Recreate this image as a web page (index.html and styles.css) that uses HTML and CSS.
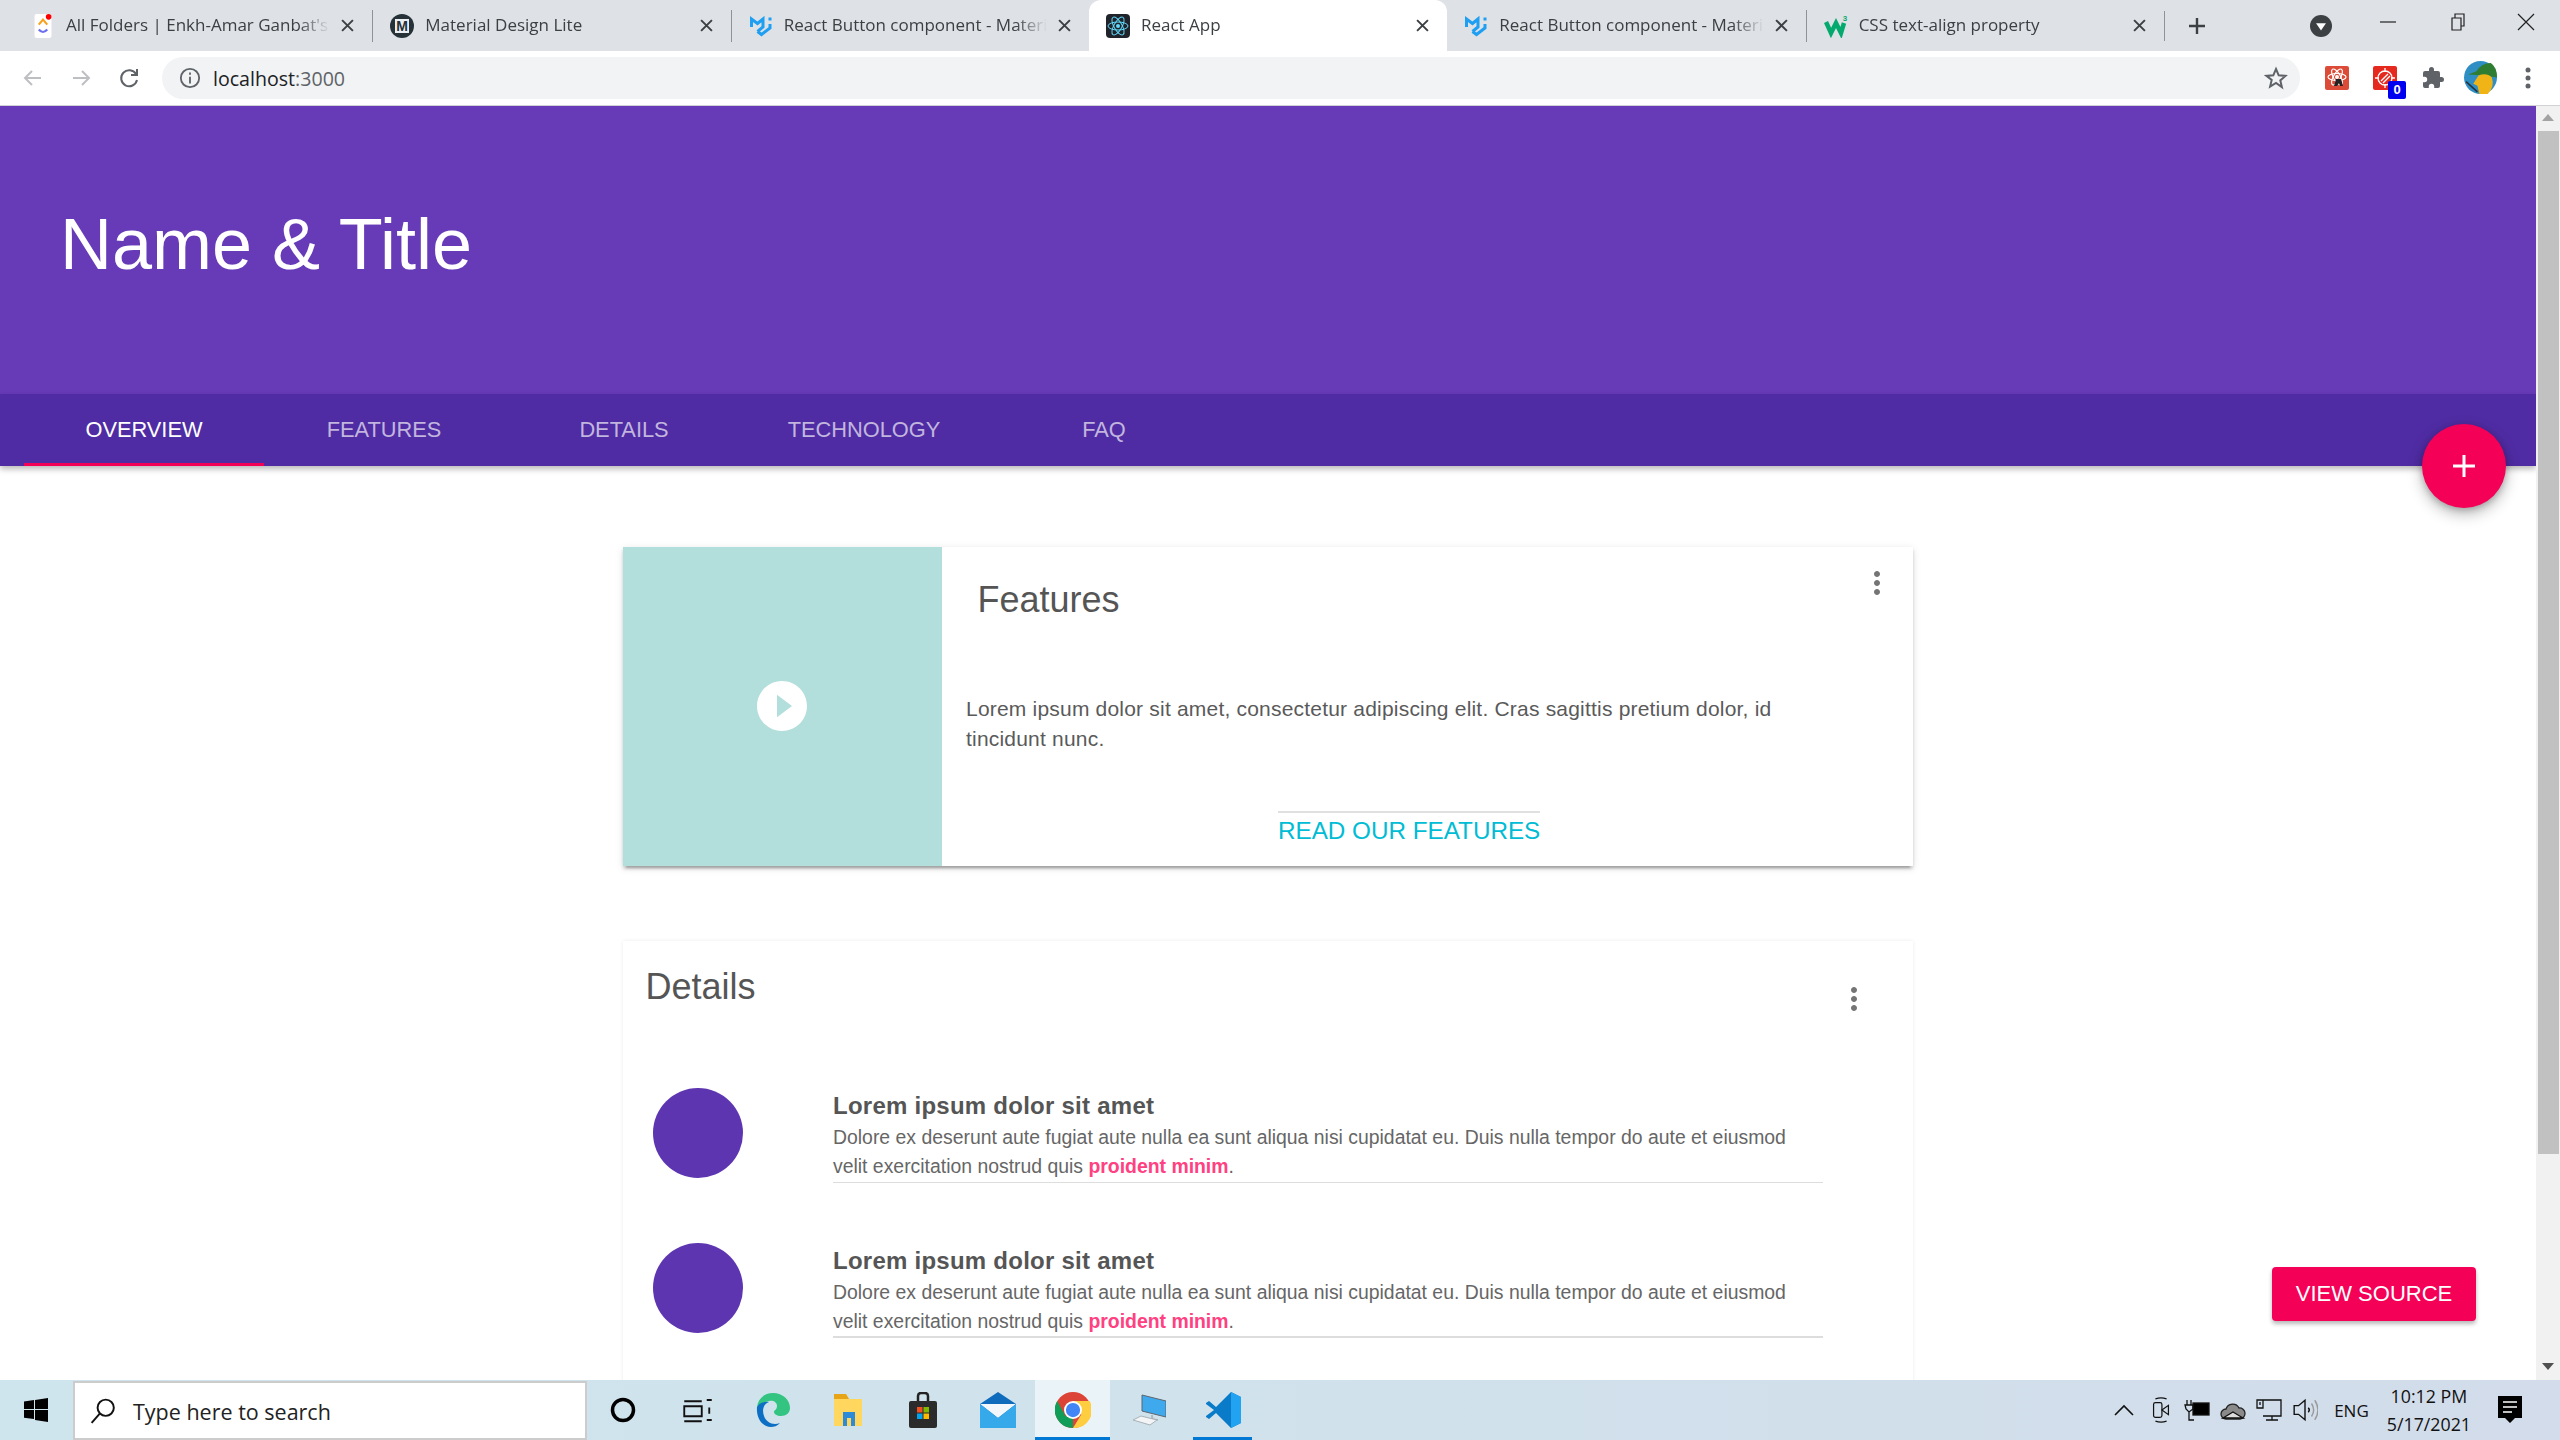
FILE: index.html
```html
<!DOCTYPE html>
<html lang="en">
<head>
<meta charset="utf-8">
<title>React App</title>
<link rel="stylesheet" href="styles.css">
</head>
<body>
<div class="screen">
  <div class="tabstrip">
    <div class="tab">
      <svg class="fav" viewBox="0 0 24 34"><rect width="24" height="34" rx="3" fill="#fff"/><path d="M6 15l6-7 6 7" fill="none" stroke="#f7a21b" stroke-width="3"/><path d="M6 22q6 7 12 0" fill="none" stroke="#6b6ff0" stroke-width="3"/><circle cx="20" cy="4" r="4" fill="#f00"/></svg>
      <span class="tab-title">All Folders | Enkh-Amar Ganbat's</span>
      <svg class="tab-x" viewBox="0 0 12 12"><path d="M1 1l10 10M11 1L1 11"/></svg>
    </div>
    <div class="tab sep">
      <svg class="fav" viewBox="0 0 24 24"><circle cx="12" cy="12" r="12" fill="#263238"/><rect x="5" y="5" width="14" height="14" fill="#eceff1"/><text x="12" y="17" text-anchor="middle" class="fav-m">M</text></svg>
      <span class="tab-title">Material Design Lite</span>
      <svg class="tab-x" viewBox="0 0 12 12"><path d="M1 1l10 10M11 1L1 11"/></svg>
    </div>
    <div class="tab sep">
      <svg class="fav" viewBox="0 0 24 24"><path class="mui" d="M2.500 13V5l6 4.500 5.500-4.500v8l-5.500 4.500M21 10v4l-8.500 6.500-4-3"/><path class="mui" d="M21 3.500v3"/></svg>
      <span class="tab-title">React Button component - Material-UI</span>
      <svg class="tab-x" viewBox="0 0 12 12"><path d="M1 1l10 10M11 1L1 11"/></svg>
    </div>
    <div class="tab active">
      <svg class="fav" viewBox="0 0 24 24"><rect width="24" height="24" rx="4" fill="#20232a"/><g fill="none" stroke="#61dafb" stroke-width="1"><ellipse cx="12" cy="12" rx="10" ry="4"/><ellipse cx="12" cy="12" rx="10" ry="4" transform="rotate(60 12 12)"/><ellipse cx="12" cy="12" rx="10" ry="4" transform="rotate(120 12 12)"/></g><circle cx="12" cy="12" r="2" fill="#61dafb"/></svg>
      <span class="tab-title">React App</span>
      <svg class="tab-x" viewBox="0 0 12 12"><path d="M1 1l10 10M11 1L1 11"/></svg>
    </div>
    <div class="tab">
      <svg class="fav" viewBox="0 0 24 24"><path class="mui" d="M2.500 13V5l6 4.500 5.500-4.500v8l-5.500 4.500M21 10v4l-8.500 6.500-4-3"/><path class="mui" d="M21 3.500v3"/></svg>
      <span class="tab-title">React Button component - Material-UI</span>
      <svg class="tab-x" viewBox="0 0 12 12"><path d="M1 1l10 10M11 1L1 11"/></svg>
    </div>
    <div class="tab sep">
      <svg class="fav" viewBox="0 0 24 24"><path class="w3" d="M2 8l5 11 5-10 5 10 3-10"/><text x="21" y="7" class="w3-num" text-anchor="middle">3</text></svg>
      <span class="tab-title">CSS text-align property</span>
      <svg class="tab-x" viewBox="0 0 12 12"><path d="M1 1l10 10M11 1L1 11"/></svg>
    </div>
    <div class="newtab">
      <svg class="plus-icon" viewBox="0 0 18 18"><path d="M9 1v16M1 9h16"/></svg>
    </div>
    <svg class="profile-drop" viewBox="0 0 20 20"><circle cx="10" cy="10" r="10" fill="#3c4043"/><path d="M5.500 7.500h9L10 14z" fill="#fff"/></svg>
    <div class="winctl">
      <svg viewBox="0 0 18 18"><path d="M1 9h16"/></svg>
      <svg viewBox="0 0 18 18"><path d="M4 5h9v12H4zM7 5V1h9v12h-3"/></svg>
      <svg viewBox="0 0 18 18"><path d="M1 1l16 16M17 1L1 17"/></svg>
    </div>
  </div>

  <div class="toolbar">
    <svg class="nav-ico dim" viewBox="0 0 24 24"><path d="M20 12H5M11 5l-7 7 7 7"/></svg>
    <svg class="nav-ico dim" viewBox="0 0 24 24"><path d="M4 12h15M13 5l7 7-7 7"/></svg>
    <svg class="nav-ico" viewBox="0 0 24 24"><path d="M19 8a8 8 0 1 0 1 6M20 3v6h-6"/></svg>
    <div class="omnibox">
      <svg class="info" viewBox="0 0 24 24"><circle cx="12" cy="12" r="10"/><path d="M12 10.500V18M12 6v2.500"/></svg>
      <span class="url">localhost<span class="url-port">:3000</span></span>
      <svg class="star" viewBox="0 0 24 24"><path d="M12 3l2.700 6.300 6.800.6-5.200 4.500 1.600 6.700L12 17l-5.900 3.600 1.600-6.700L2.500 9.900l6.800-.6z"/></svg>
    </div>
    <div class="ext ext-a"><svg viewBox="0 0 24 24"><g fill="none" stroke="#fff" stroke-width="1.200"><ellipse cx="12" cy="11" rx="9" ry="3.500"/><ellipse cx="12" cy="11" rx="9" ry="3.500" transform="rotate(60 12 11)"/><ellipse cx="12" cy="11" rx="9" ry="3.500" transform="rotate(120 12 11)"/></g><circle cx="12" cy="11" r="2" fill="#fff"/><path d="M11 13h5l2 7h-3l-1-3-2 3h-3z" fill="#222"/></svg></div>
    <div class="ext ext-b"><svg viewBox="0 0 24 24"><g fill="none" stroke="#fff" stroke-width="1.300"><circle cx="12" cy="12" r="7"/><path d="M12 2v4M12 18v4M2 12h4M18 12h4M8 15l7-7M10 17l7-7"/></g></svg><span class="badge">0</span></div>
    <svg class="puzzle" viewBox="0 0 24 24"><path d="M20.500 11H19V7a2 2 0 0 0-2-2h-4V3.500a2.500 2.500 0 0 0-5 0V5H4a2 2 0 0 0-2 2v3.800h1.500a2.700 2.700 0 0 1 0 5.400H2V20a2 2 0 0 0 2 2h3.800v-1.500a2.700 2.700 0 0 1 5.400 0V22H17a2 2 0 0 0 2-2v-4h1.500a2.500 2.500 0 0 0 0-5z"/></svg>
    <svg class="avatar-top" viewBox="0 0 32 32"><circle cx="16" cy="16" r="16" fill="#2f8fc4"/><path d="M4 13l8-3q5-8 14-8 6 4 6 14l-12-2z" fill="#2f7d32"/><path d="M14 14q8-3 13 2 3 9-4 16h-8l-2-8-4-2z" fill="#f0b416"/><path d="M2 20l11 10" stroke="#263238" stroke-width="1.500"/></svg>
    <svg class="kebab-top" viewBox="0 0 6 24"><circle cx="3" cy="4" r="2.500"/><circle cx="3" cy="12" r="2.500"/><circle cx="3" cy="20" r="2.500"/></svg>
  </div>

  <div class="viewport">
    <div class="page">
      <header class="hero"><h1 class="hero-title">Name &amp; Title</h1></header>
      <nav class="tabs">
        <a class="nav-tab current">OVERVIEW</a>
        <a class="nav-tab">FEATURES</a>
        <a class="nav-tab">DETAILS</a>
        <a class="nav-tab">TECHNOLOGY</a>
        <a class="nav-tab">FAQ</a>
      </nav>
      <button class="fab"><svg viewBox="0 0 22 22"><path d="M11 0v22M0 11h22"/></svg></button>

      <main class="content">
        <section class="card card-features">
          <div class="media">
            <svg class="play" viewBox="0 0 24 24"><path d="M12 2C6.480 2 2 6.480 2 12s4.480 10 10 10 10-4.480 10-10S17.520 2 12 2zm-2 14.500v-9l6 4.500-6 4.500z"/></svg>
          </div>
          <div class="features-body">
            <div class="card-head head-features">
              <h2 class="card-title title-features">Features</h2>
              <svg class="more" viewBox="0 0 24 24"><path d="M12 8c1.100 0 2-.9 2-2s-.9-2-2-2-2 .9-2 2 .9 2 2 2zm0 2c-1.100 0-2 .9-2 2s.9 2 2 2 2-.9 2-2-.9-2-2-2zm0 6c-1.100 0-2 .9-2 2s.9 2 2 2 2-.9 2-2-.9-2-2-2z"/></svg>
            </div>
            <p class="features-text">Lorem ipsum dolor sit amet, consectetur adipiscing elit. Cras sagittis pretium dolor, id tincidunt nunc.</p>
            <a class="read-more">READ OUR FEATURES</a>
          </div>
        </section>

        <section class="card card-details">
          <div class="card-head head-details">
            <h2 class="card-title">Details</h2>
            <svg class="more more-details" viewBox="0 0 24 24"><path d="M12 8c1.100 0 2-.9 2-2s-.9-2-2-2-2 .9-2 2 .9 2 2 2zm0 2c-1.100 0-2 .9-2 2s.9 2 2 2 2-.9 2-2-.9-2-2-2zm0 6c-1.100 0-2 .9-2 2s.9 2 2 2 2-.9 2-2-.9-2-2-2z"/></svg>
          </div>
          <div class="detail-row">
            <div class="dot"></div>
            <div class="detail-text">
              <h3 class="detail-title">Lorem ipsum dolor sit amet</h3>
              <p class="detail-copy">Dolore ex deserunt aute fugiat aute nulla ea sunt aliqua nisi cupidatat eu. Duis nulla tempor do aute et eiusmod velit exercitation nostrud quis <b class="accent">proident minim</b>.</p>
            </div>
          </div>
          <div class="detail-row">
            <div class="dot"></div>
            <div class="detail-text thick">
              <h3 class="detail-title">Lorem ipsum dolor sit amet</h3>
              <p class="detail-copy">Dolore ex deserunt aute fugiat aute nulla ea sunt aliqua nisi cupidatat eu. Duis nulla tempor do aute et eiusmod velit exercitation nostrud quis <b class="accent">proident minim</b>.</p>
            </div>
          </div>
        </section>
      </main>

      <a class="view-source">VIEW SOURCE</a>
    </div>
    <div class="scrollbar">
      <div class="sb-arrow up"></div>
      <div class="sb-thumb"></div>
      <div class="sb-arrow down"></div>
    </div>
  </div>

  <footer class="taskbar">
    <div class="start"><svg viewBox="0 0 24 24"><path d="M0 3.500l10-1.400V11H0zM11 2l13-2v11H11zM0 12h10v9L0 19.700zM11 12h13v12l-13-2z"/></svg></div>
    <div class="search">
      <svg viewBox="0 0 24 24"><circle cx="14.500" cy="9" r="7.500"/><path d="M9 14.500L1.500 23"/></svg>
      <span>Type here to search</span>
    </div>
    <div class="apps">
      <div class="app"><svg class="cortana" viewBox="0 0 24 24"><circle cx="12" cy="12" r="9"/></svg></div>
      <div class="app"><svg class="taskview" viewBox="0 0 24 24"><path d="M1 5h14M1 9h14v8H1zM1 21h14M19 4h4M19 20h4M21 10v5" /></svg></div>
      <div class="app"><svg viewBox="0 0 36 36"><path d="M18 1c10 0 17 7 17 15 0 5-4 8-9 8-4 0-7-2-7-4 0-2 3-2 3-6 0-4-4-6-8-5C8 10 3 14 2 15 3 7 9 1 18 1z" fill="#33c481"/><path d="M2 15c2-4 8-6 12-5-6 2-7 9-5 14 2 6 9 10 16 7-3 3-6 4-9 4C8 35 1 27 2 15z" fill="#0c6fc4"/></svg></div>
      <div class="app"><svg viewBox="0 0 32 36"><path d="M2 2h12l3 5h13v27H2z" fill="#ffd75e"/><path d="M2 2h12l3 5H2z" fill="#e8a417"/><path d="M11 34V20h12v14h-4v-8h-4v8z" fill="#2d8ad8"/></svg></div>
      <div class="app"><svg viewBox="0 0 28 36"><path d="M9 11V4q0-3 3-3h4q3 0 3 3v7" fill="none" stroke="#222" stroke-width="2.500"/><rect y="9" width="28" height="27" rx="2" fill="#2b2b2b"/><rect x="8" y="15" width="5.500" height="5.500" fill="#f25022"/><rect x="14.500" y="15" width="5.500" height="5.500" fill="#7fba00"/><rect x="8" y="21.500" width="5.500" height="5.500" fill="#00a4ef"/><rect x="14.500" y="21.500" width="5.500" height="5.500" fill="#ffb900"/></svg></div>
      <div class="app"><svg viewBox="0 0 36 36"><path d="M0 12L18 0l18 12v24H0z" fill="#0f6cbd"/><path d="M0 12h36L18 26z" fill="#f2f7fb"/><path d="M0 36V12l18 14 18-14v24z" fill="#35a9ea"/></svg></div>
      <div class="app app-active"><svg viewBox="0 0 48 48"><circle cx="24" cy="24" r="24" fill="#db4437"/><path d="M24 48A24 24 0 0 1 3 12l11 20 10 2z" fill="#0f9d58"/><path d="M24 12h22a24 24 0 0 1-22 36l11-18z" fill="#ffcd40"/><circle cx="24" cy="24" r="12" fill="#fff"/><circle cx="24" cy="24" r="9.500" fill="#4285f4"/></svg></div>
      <div class="app"><svg viewBox="0 0 36 36"><path d="M12 3l24 6v16L12 19z" fill="#3fa9ee" stroke="#5b6770"/><path d="M22 23v4l6 1" fill="#cfd8dc" stroke="#8a979f"/><path d="M3 28l8-4 16 4-7 5z" fill="#f2f4f5" stroke="#a8b2b8"/></svg></div>
      <div class="app app-open"><svg viewBox="0 0 36 36"><path d="M26 0l10 5v26l-10 5L11 21 4 27l-3-2v-1l8-6-8-6v-1l3-2 7 6z" fill="#0a7bc8"/><path d="M26 0l10 5v26l-10 5z" fill="#22a3f2"/></svg></div>
    </div>
    <div class="tray">
      <svg class="tray-ico chev" viewBox="0 0 20 12"><path d="M1 11l9-9 9 9"/></svg>
      <svg class="tray-ico" viewBox="0 0 20 28"><rect x="2" y="6" width="9" height="16" rx="2"/><path d="M11 14l7-5v10zM4 2q6-2 12 0M4 26q6 2 12 0"/></svg>
      <svg class="tray-ico" viewBox="0 0 26 22"><rect x="9" y="4" width="16" height="12" fill="#000"/><path d="M3 1v5M7 1v5M1 6h8v4l-4 3-3-3zM5 13v8h5"/></svg>
      <svg class="tray-ico" viewBox="0 0 26 20"><path d="M6 19a5 5 0 0 1 0-10 7 7 0 0 1 13-1 5.500 5.500 0 0 1 1 11z" fill="#8a8a8a" stroke="#222"/><path d="M3 18l10-6 10 6z" fill="#ddd"/></svg>
      <svg class="tray-ico" viewBox="0 0 26 24"><path d="M1 2h6v8H1zM7 2h18v16H7M16 18v4M10 22h12M4 4v3"/></svg>
      <svg class="tray-ico" viewBox="0 0 24 24"><path d="M2 8h4l6-5v18l-6-5H2zM15 10q2 2 0 4"/><path class="faint" d="M18 6q4 6 0 12M21 3q6 9 0 18"/></svg>
      <span class="lang">ENG</span>
      <div class="clock"><span>10:12 PM</span><span>5/17/2021</span></div>
      <svg class="notif" viewBox="0 0 24 28"><path d="M0 0h24v22h-7l-5 5-5-5H0z" fill="#000"/><path d="M5 6h14M5 11h14M5 16h9" stroke="#fff" stroke-width="1.500"/></svg>
    </div>
  </footer>
</div>
</body>
</html>
```
FILE: styles.css
```css
* { box-sizing: border-box; }
html, body { margin: 0; padding: 0; }
body { font-family: "Liberation Sans", Arial, sans-serif; background: #fff; }
.screen { width: 2560px; height: 1440px; display: flex; flex-direction: column; overflow: hidden; }

/* browser chrome */
.tabstrip { height: 51px; background: #dee1e6; display: flex; align-items: center; padding-left: 14px; flex: none; font-family: "Open Sans", sans-serif; }
.tab { width: 358.33px; height: 51px; display: flex; align-items: center; padding: 0 18px 0 17px; gap: 11px; position: relative; flex: none; }
.tab.sep { border-left: 1.5px solid #8f9297; border-image: linear-gradient(#dee1e6 11px, #8f9297 11px, #8f9297 41px, #dee1e6 41px) 1; }
.tab.active { background: #fff; border-radius: 12px 12px 0 0; }
.fav { width: 24px; height: 24px; flex: none; }
.fav-m { font-size: 14px; font-weight: 700; font-family: "Liberation Sans", sans-serif; fill: #263238; }
.mui { fill: none; stroke: #1e9ff2; stroke-width: 3; }
.w3 { fill: none; stroke: #04aa6d; stroke-width: 4.500; }
.w3-num { font: 700 8px "Liberation Sans", sans-serif; fill: #04aa6d; }
.tab-title { flex: 1; min-width: 0; white-space: nowrap; overflow: hidden; font-size: 17px; line-height: 24px; padding-bottom: 2px; color: #3c4043; -webkit-mask-image: linear-gradient(90deg, #000 88%, transparent); mask-image: linear-gradient(90deg, #000 88%, transparent); }
.tab-x { width: 13px; height: 13px; flex: none; fill: none; stroke: #3c4043; stroke-width: 1.8; }
.newtab { width: 66px; height: 30px; display: flex; align-items: center; justify-content: center; border-left: 1.5px solid #8f9297; }
.plus-icon { width: 18px; height: 18px; fill: none; stroke: #3c4043; stroke-width: 2.4; }
.profile-drop { width: 22px; height: 22px; margin-left: 80px; flex: none; }
.winctl { display: flex; margin-left: 47px; gap: 51px; align-self: flex-start; padding-top: 13px; }
.winctl svg { width: 18px; height: 18px; fill: none; stroke: #222; stroke-width: 1.2; }

.toolbar { height: 55px; background: #fff; border-bottom: 1px solid #d0d0d5; display: flex; align-items: flex-start; padding: 6px 0 0 21px; flex: none; }
.nav-ico { width: 24px; height: 24px; margin: 9px 24px 0 0; fill: none; stroke: #5f6368; stroke-width: 2; flex: none; }
.nav-ico.dim { stroke: #bdbfc2; }
.omnibox { width: 2138px; height: 42px; margin-left: -3px; background: #f1f3f4; border-radius: 21px; display: flex; align-items: center; padding: 0 12px 0 17px; flex: none; }
.info { width: 22px; height: 22px; fill: none; stroke: #5f6368; stroke-width: 2; flex: none; }
.url { margin-left: 12px; font: 19.600px "Open Sans", sans-serif; color: #202124; }
.url-port { color: #5f6368; }
.star { width: 24px; height: 24px; margin-left: auto; fill: none; stroke: #5f6368; stroke-width: 2; }
.ext { width: 24px; height: 24px; margin-top: 9px; position: relative; flex: none; border-radius: 2px; }
.ext svg { width: 24px; height: 24px; display: block; }
.ext-a { background: #dc4a38; margin-left: 25px; }
.ext-b { background: #e6291f; margin-left: 24px; }
.badge { position: absolute; left: 15px; top: 15px; width: 18px; height: 18px; background: #0000f0; color: #fff; border-radius: 2px; font: 700 13px/18px "Liberation Sans", sans-serif; text-align: center; }
.puzzle { width: 24px; height: 24px; margin: 9px 0 0 24px; fill: #5f6368; flex: none; }
.avatar-top { width: 33px; height: 33px; margin: 4px 0 0 19px; flex: none; }
.kebab-top { width: 6px; height: 24px; margin: 9px 0 0 28px; fill: #5f6368; flex: none; }

/* page */
.viewport { flex: 1; display: flex; min-height: 0; }
.page { flex: 1; min-width: 0; position: relative; overflow: hidden; background: #fff; }
.hero { height: 288px; background: #673ab7; display: flex; align-items: center; padding: 0 0 0 60px; }
.hero-title { margin: 0; font-size: 72px; font-weight: 400; color: #fff; line-height: 1; position: relative; top: -6px; }
.tabs { height: 72px; background: #4f2ca3; display: flex; padding-left: 24px; box-shadow: 0 3px 6px rgba(0,0,0,.28); position: relative; }
.nav-tab { width: 240px; display: flex; align-items: center; justify-content: center; font-size: 21.800px; color: rgba(255,255,255,.66); }
.nav-tab.current { color: #fff; border-bottom: 3px solid #f50057; padding-top: 3px; }
.fab { position: absolute; left: 2422px; top: 318px; width: 84px; height: 84px; padding: 0; border: 0; border-radius: 50%; background: #f50057; box-shadow: 0 6px 15px rgba(0,0,0,.28), 0 2px 6px rgba(0,0,0,.2); display: flex; align-items: center; justify-content: center; }
.fab svg { width: 22px; height: 22px; fill: none; stroke: #fff; stroke-width: 3; }

.content { padding-top: 81px; display: flex; flex-direction: column; align-items: center; gap: 75px; }
.card { width: 1290px; background: #fff; flex: none; }
.card-features { height: 319px; display: flex; box-shadow: 0 3px 3px rgba(0,0,0,.14), 0 5px 2px -3px rgba(0,0,0,.2), 0 2px 8px rgba(0,0,0,.12); }
.media { width: 319px; background: #b2dfdb; display: flex; align-items: center; justify-content: center; flex: none; padding: 0 1px 2px 0; }
.play { width: 60px; height: 60px; fill: #fff; }
.features-body { flex: 1; display: flex; flex-direction: column; min-width: 0; }
.card-head { display: flex; justify-content: space-between; align-items: flex-start; }
.head-features { padding: 18px 18px 0 35.500px; }
.card-title { margin: 0; font-size: 36px; line-height: 42px; font-weight: 400; color: #555; }
.title-features { margin-top: 14px; }
.more { width: 36px; height: 36px; fill: #757575; flex: none; }
.features-text { margin: 73px 100px 0 24px; font-size: 21px; letter-spacing: .2px; line-height: 30px; color: #5a5a5a; }
.read-more { align-self: flex-start; margin: 57px 0 0 336px; border-top: 2px solid #e0e0e0; font-size: 24.250px; line-height: 36px; color: #00bcd4; white-space: nowrap; }

.card-details { height: 600px; box-shadow: 0 0 4px rgba(0,0,0,.08); }
.head-details { padding: 25px 41px 0 22.500px; }
.more-details { margin-top: 15px; }
.detail-row { display: flex; gap: 90px; padding-left: 30px; margin-top: 71px; }
.detail-row + .detail-row { margin-top: 60px; }
.dot { width: 90px; height: 90px; border-radius: 50%; background: #5e35b1; flex: none; }
.detail-text { width: 990px; padding-top: 3px; padding-bottom: 1px; border-bottom: 1px solid #ddd; height: 95px; }
.detail-text.thick { border-bottom-width: 2px; }
.detail-title { margin: 0; font-size: 24px; line-height: 30px; font-weight: 700; color: #555; letter-spacing: .25px; }
.detail-copy { margin: 2px 0 0; font-size: 19.400px; line-height: 29px; color: #666; }
.accent { color: #ff4081; }
.view-source { position: absolute; left: 2272px; top: 1161px; width: 204px; height: 54px; border-radius: 4px; background: #f50057; color: #fff; font-size: 22px; display: flex; align-items: center; justify-content: center; box-shadow: 0 3px 4px rgba(0,0,0,.28); }

.scrollbar { width: 24px; background: #f1f1f1; display: flex; flex-direction: column; padding: 0 1px 0 2px; flex: none; }
.sb-arrow { height: 25px; flex: none; position: relative; }
.sb-thumb { height: 1023px; background: #c1c1c1; flex: none; }
.sb-arrow.up::after, .sb-arrow.down::after { content: ""; position: absolute; left: 4px; border-left: 6px solid transparent; border-right: 6px solid transparent; }
.sb-arrow.up::after { top: 8px; border-bottom: 7px solid #a3a3a3; }
.sb-arrow.down { margin-top: auto; }
.sb-arrow.down::after { top: 8px; border-top: 7px solid #505050; }

/* taskbar */
.taskbar { height: 60px; flex: none; display: flex; align-items: center; background: linear-gradient(90deg, #cfe5ee, #d0e2ec 45%, #d2dcea); }
.start { width: 73px; display: flex; align-items: center; justify-content: center; flex: none; padding-right: 2px; }
.start svg { width: 24px; height: 24px; fill: #000; }
.search { width: 514px; height: 59px; align-self: flex-end; background: #fff; border: 2px solid #ccc; display: flex; align-items: center; gap: 17px; padding: 2px 0 0 15px; font: 21.500px "Open Sans", sans-serif; color: #222; flex: none; }
.search svg { width: 26px; height: 26px; margin-top: -2px; fill: none; stroke: #111; stroke-width: 1.800; flex: none; }
.apps { display: flex; align-items: center; height: 60px; flex: none; margin-left: -2px; }
.app { width: 75px; height: 60px; display: flex; align-items: center; justify-content: center; flex: none; }
.app svg { width: 36px; height: 36px; }
.apps .cortana { width: 28px; height: 28px; fill: none; stroke: #000; stroke-width: 3; }
.apps .taskview { width: 30px; height: 30px; fill: none; stroke: #111; stroke-width: 1.500; }
.app-active { background: #eaf3f8; border-bottom: 3px solid #0078d4; padding-top: 3px; }
.app-open { position: relative; }
.app-open::after { content: ""; position: absolute; left: 8px; right: 8px; bottom: 0; height: 3px; background: #0078d4; }
.tray { margin-left: auto; display: flex; align-items: center; padding-right: 38px; height: 60px; flex: none; }
.tray-ico { width: 26px; height: 26px; margin-right: 10px; fill: none; stroke: #111; stroke-width: 1.300; flex: none; }
.faint { stroke: #999; }
.chev { width: 20px; height: 14px; margin-right: 14px; stroke-width: 1.600; }
.lang { font: 17px "Open Sans", sans-serif; color: #111; margin: 0 18px 0 6px; }
.clock { display: flex; flex-direction: column; align-items: center; gap: 6px; font: 17.800px/22px "Open Sans", sans-serif; color: #111; margin-right: 27px; }
.notif { width: 24px; height: 28px; flex: none; }
```
